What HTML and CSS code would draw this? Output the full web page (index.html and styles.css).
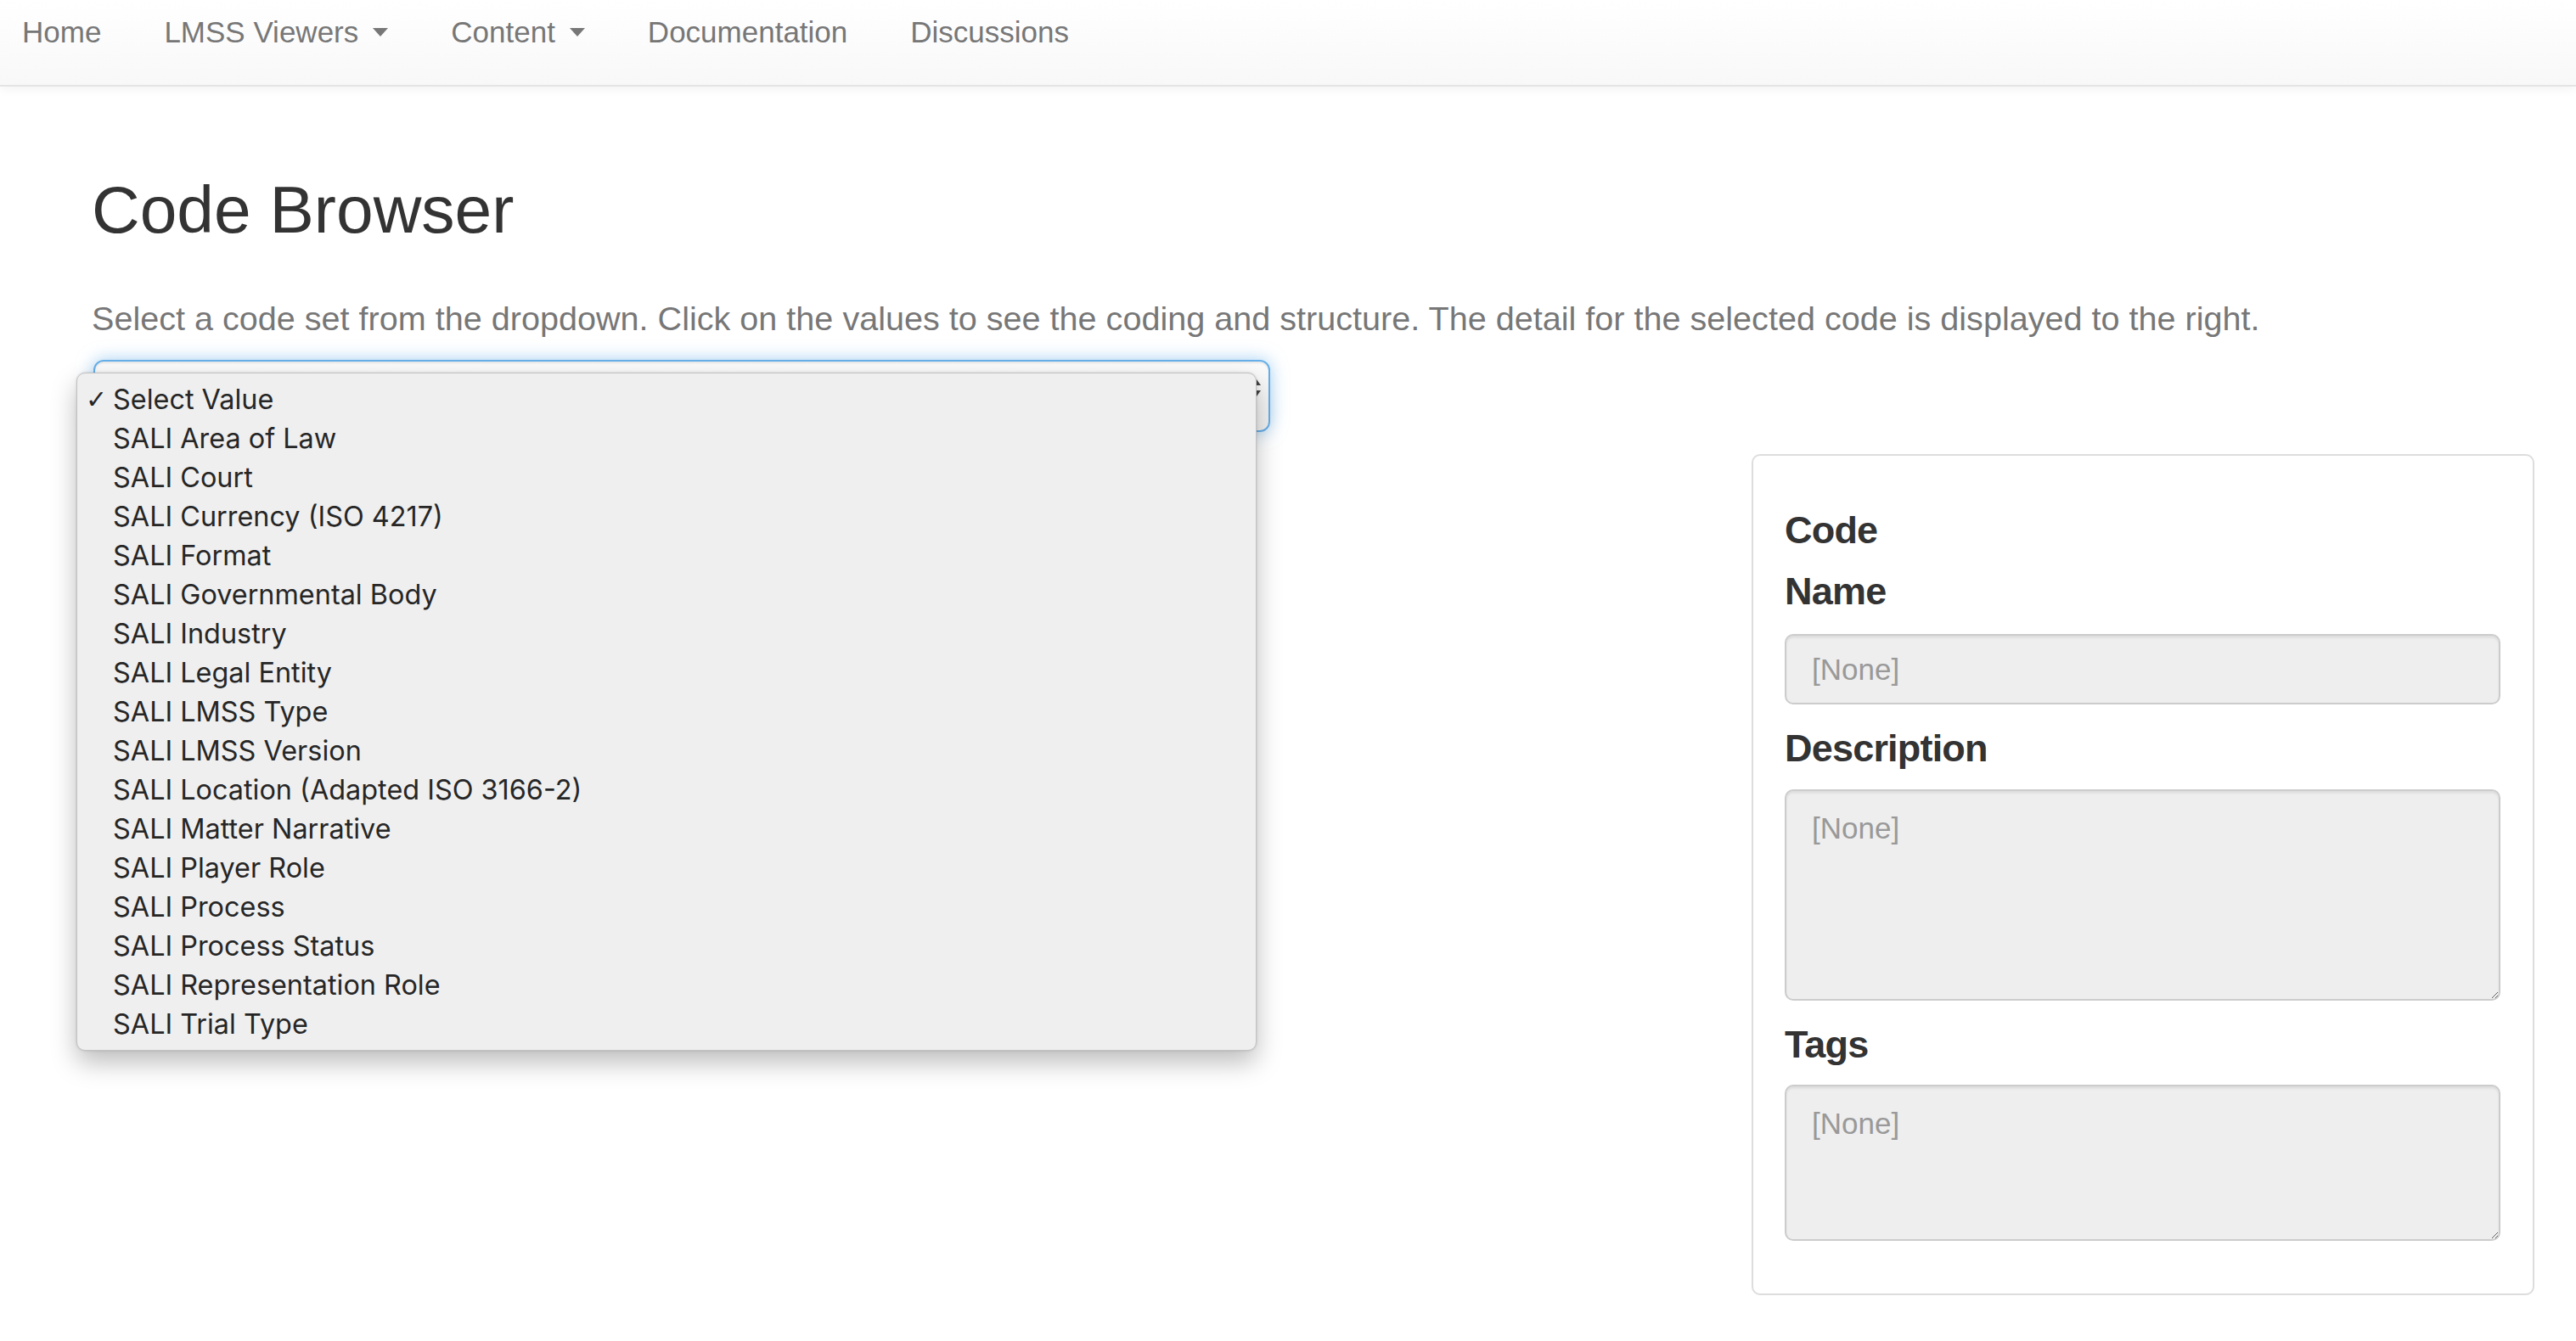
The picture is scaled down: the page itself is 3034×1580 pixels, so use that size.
FILE: index.html
```html
<!DOCTYPE html>
<html lang="en">
<head>
<meta charset="utf-8">
<title>Code Browser</title>
<link rel="stylesheet" href="styles.css">
</head>
<body>
<nav class="navbar">
  <ul class="nav">
    <li><a href="#">Home</a></li>
    <li><a href="#">LMSS Viewers<span class="caret"></span></a></li>
    <li><a href="#">Content<span class="caret"></span></a></li>
    <li><a href="#">Documentation</a></li>
    <li><a href="#">Discussions</a></li>
  </ul>
</nav>
<main class="page">
  <h1 class="title">Code Browser</h1>
  <p class="intro">Select a code set from the dropdown. Click on the values to see the coding and structure. The detail for the selected code is displayed to the right.</p>
  <div class="picker">
    <div class="select-box">
      <svg class="select-arrows" width="12" height="24" viewBox="0 0 12 24"><path d="M6 2 L11 9 L1 9 Z" fill="#444"/><path d="M6 22 L11 15 L1 15 Z" fill="#444"/></svg>
    </div>
    <ul class="menu">
      <li><span class="check">✓</span>Select Value</li>
      <li><span class="check"></span>SALI Area of Law</li>
      <li><span class="check"></span>SALI Court</li>
      <li><span class="check"></span>SALI Currency (ISO 4217)</li>
      <li><span class="check"></span>SALI Format</li>
      <li><span class="check"></span>SALI Governmental Body</li>
      <li><span class="check"></span>SALI Industry</li>
      <li><span class="check"></span>SALI Legal Entity</li>
      <li><span class="check"></span>SALI LMSS Type</li>
      <li><span class="check"></span>SALI LMSS Version</li>
      <li><span class="check"></span>SALI Location (Adapted ISO 3166-2)</li>
      <li><span class="check"></span>SALI Matter Narrative</li>
      <li><span class="check"></span>SALI Player Role</li>
      <li><span class="check"></span>SALI Process</li>
      <li><span class="check"></span>SALI Process Status</li>
      <li><span class="check"></span>SALI Representation Role</li>
      <li><span class="check"></span>SALI Trial Type</li>
    </ul>
  </div>
  <div class="row">
    <section class="detail">
      <h4 class="label label-code">Code</h4>
      <h4 class="label label-name">Name</h4>
      <input class="field field-input" type="text" placeholder="[None]" readonly>
      <h4 class="label label-desc">Description</h4>
      <textarea class="field field-desc" placeholder="[None]" readonly></textarea>
      <h4 class="label label-tags">Tags</h4>
      <textarea class="field field-tags" placeholder="[None]" readonly></textarea>
    </section>
  </div>
</main>
</body>
</html>
```
FILE: styles.css
```css
body {
  margin: 0;
  font-family: "Liberation Sans", Arial, sans-serif;
  color: #333;
  background: #fff;
}

.navbar {
  height: 100px;
  border-bottom: 2px solid #e4e4e4;
  background: linear-gradient(#ffffff, #f8f8f8);
  box-shadow: 0 2px 12px rgba(0, 0, 0, 0.06);
}

.nav {
  list-style: none;
  margin: 0;
  padding: 13px 0 0 26px;
  display: flex;
  gap: 74px;
}

.nav a {
  display: block;
  font-size: 35px;
  line-height: 50px;
  color: #777;
  text-decoration: none;
}

.caret {
  display: inline-block;
  width: 0;
  height: 0;
  border-top: 10px solid #777;
  border-left: 9px solid transparent;
  border-right: 9px solid transparent;
  margin-left: 17px;
  vertical-align: 7px;
}

.page {
  padding: 0 49px 0 108px;
}

.title {
  font-size: 78.5px;
  font-weight: 500;
  line-height: 1.1;
  margin: 102px 0 0;
  color: #333;
}

.intro {
  font-size: 39.6px;
  line-height: 57px;
  color: #777;
  margin: 57px 0 0;
}

.picker {
  position: relative;
  width: 1386px;
  margin: 20px 0 0 2px;
}

.select-box {
  box-sizing: border-box;
  height: 85px;
  border: 2px solid #66afe9;
  border-radius: 12px;
  background: linear-gradient(#fbfbfb, #f1f1f1);
  box-shadow: inset 0 2px 2px rgba(0, 0, 0, 0.075), 0 0 20px rgba(102, 175, 233, 0.6);
  display: flex;
  align-items: center;
  justify-content: flex-end;
  padding-right: 8px;
}

.select-arrows {
  display: block;
  margin-top: -20px;
}

.menu {
  position: absolute;
  left: -20px;
  top: 15px;
  box-sizing: border-box;
  width: 1390px;
  height: 799px;
  margin: 0;
  padding: 8px 0 7px;
  list-style: none;
  background: #efefef;
  border: 1px solid #c2c2c2;
  border-radius: 10px;
  box-shadow: 0 14px 30px rgba(0, 0, 0, 0.26), 0 0 3px rgba(0, 0, 0, 0.15);
  font-family: Inter, "Noto Sans", sans-serif;
  font-size: 32.4px;
  color: #262626;
}

.menu li {
  display: flex;
  align-items: center;
  height: 46px;
  line-height: 46px;
  padding-left: 10px;
  white-space: nowrap;
}

.check {
  display: inline-block;
  width: 32px;
  flex: none;
  font-family: "DejaVu Sans", sans-serif;
  font-size: 30px;
  color: #262626;
}

.row {
  display: flex;
  justify-content: flex-end;
  margin-top: 26px;
}

.detail {
  box-sizing: border-box;
  width: 922px;
  border: 2px solid #dddddd;
  border-radius: 10px;
  padding: 0 38px 62px 37px;
  display: flex;
  flex-direction: column;
}

.label {
  font-size: 45px;
  font-weight: 700;
  line-height: 49.5px;
  letter-spacing: -0.8px;
  margin: 0;
  color: #333;
}

.label-code { margin-top: 63px; }
.label-name { margin-top: 22px; }
.label-desc { margin-top: 27px; }
.label-tags { margin-top: 27px; }

.field {
  box-sizing: border-box;
  width: 100%;
  border: 2px solid #cccccc;
  border-radius: 10px;
  background: #eeeeee;
  box-shadow: inset 0 2.5px 2.5px rgba(0, 0, 0, 0.075);
  font-family: "Liberation Sans", Arial, sans-serif;
  font-size: 35px;
  color: #555;
  outline: none;
  display: block;
}

.field::placeholder {
  color: #999;
  opacity: 1;
}

.field-input {
  height: 83px;
  padding: 0 30px;
  margin-top: 26px;
}

.field-desc,
.field-tags {
  padding: 19px 30px;
  line-height: 50px;
  resize: vertical;
  margin-top: 23px;
}

.field-desc { height: 249px; }
.field-tags { height: 184px; }
```
